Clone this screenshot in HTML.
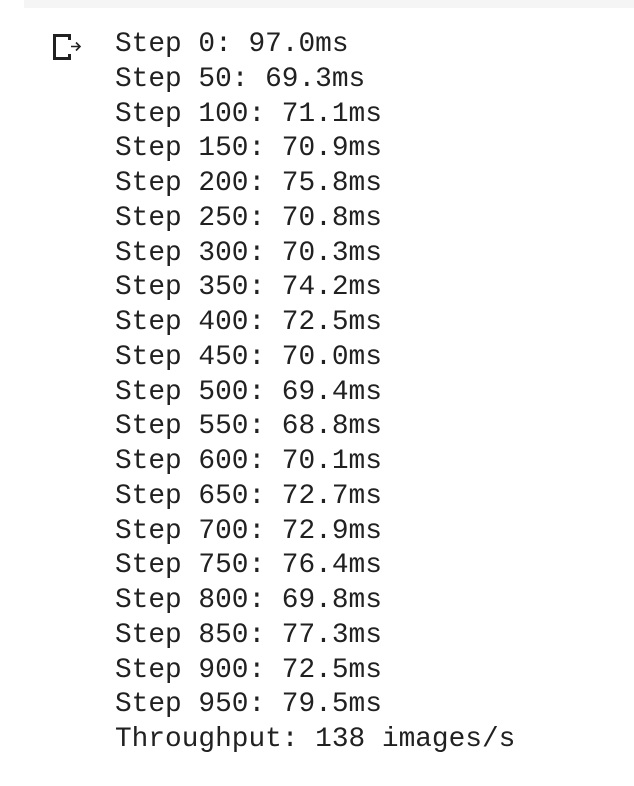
<!DOCTYPE html>
<html><head><style>
body{margin:0;width:634px;height:786px;background:#fff;position:relative;overflow:hidden}
.bar{position:absolute;left:24px;top:0;width:610px;height:8px;background:#f5f5f5}
pre{position:absolute;left:115px;top:28px;margin:0;font-family:"Liberation Mono",monospace;font-size:27.8px;line-height:34.75px;color:#212121}
svg{position:absolute;left:0;top:0}
</style></head><body>
<div class="bar"></div>
<svg width="100" height="80" viewBox="0 0 100 80"><path d="M70 35.5H54.5v23H70" fill="none" stroke="#212121" stroke-width="3"/><path d="M69.5 34v6M69.5 54v6" stroke="#212121" stroke-width="3"/><path d="M71 46.5h9M76 42.5l4 4-4 4" fill="none" stroke="#212121" stroke-width="1.6"/></svg>
<pre>Step 0: 97.0ms
Step 50: 69.3ms
Step 100: 71.1ms
Step 150: 70.9ms
Step 200: 75.8ms
Step 250: 70.8ms
Step 300: 70.3ms
Step 350: 74.2ms
Step 400: 72.5ms
Step 450: 70.0ms
Step 500: 69.4ms
Step 550: 68.8ms
Step 600: 70.1ms
Step 650: 72.7ms
Step 700: 72.9ms
Step 750: 76.4ms
Step 800: 69.8ms
Step 850: 77.3ms
Step 900: 72.5ms
Step 950: 79.5ms
Throughput: 138 images/s</pre>
</body></html>
